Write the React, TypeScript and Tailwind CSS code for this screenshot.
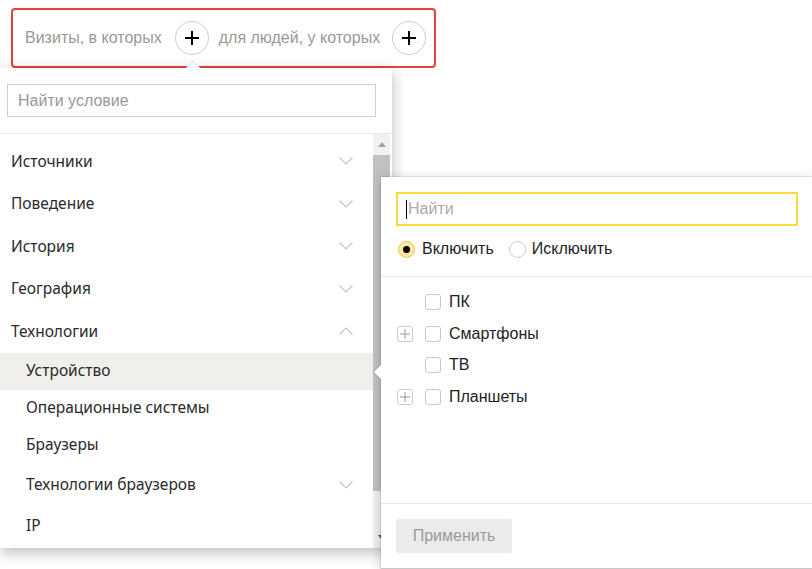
import React from "react";

const Chevron = ({ up = false }: { up?: boolean }) => (
  <svg width="14" height="8" viewBox="0 0 14 8" className="shrink-0">
    <path
      d={up ? "M0.5 7.5 L7 1 L13.5 7.5" : "M0.5 0.5 L7 7 L13.5 0.5"}
      fill="none"
      stroke="#c4c4c4"
      strokeWidth="1.1"
    />
  </svg>
);

const PlusCircle = () => (
  <div className="w-[34px] h-[34px] rounded-full border border-[#cfcfcf] flex items-center justify-center shrink-0 bg-white">
    <svg width="16" height="16" viewBox="0 0 16 16">
      <path d="M8 1 V15 M1 8 H15" stroke="#000" strokeWidth="2" />
    </svg>
  </div>
);

const SmallPlus = () => (
  <div className="w-[16px] h-[16px] rounded-[3px] border border-[#cccccc] flex items-center justify-center">
    <svg width="10" height="10" viewBox="0 0 10 10">
      <path d="M5 0 V10 M0 5 H10" stroke="#9a9a9a" strokeWidth="1" />
    </svg>
  </div>
);

const Checkbox = () => (
  <div className="w-[16px] h-[16px] rounded-[3px] border border-[#c8c8c8] bg-white" />
);

const topItems = ["Источники", "Поведение", "История", "География"];

export default function App() {
  return (
    <div
      className="relative w-[812px] h-[569px] bg-white overflow-hidden text-[16px] text-black"
      style={{ fontFamily: '"Liberation Sans", Arial, sans-serif' }}
    >
      {/* Header condition box */}
      <div className="ml-[11px] mt-[8px] w-[425px] h-[60px] border-2 border-[#e8413a] rounded-[4px] flex items-center pl-[12px]">
        <span className="text-[#999999]">Визиты, в которых</span>
        <div className="ml-[13px]">
          <PlusCircle />
        </div>
        <span className="text-[#999999] ml-[10px]">для людей, у которых</span>
        <div className="ml-[12px]">
          <PlusCircle />
        </div>
      </div>

      {/* Left dropdown */}
      <div className="absolute left-0 top-[68px] w-[392px] h-[480px] bg-white shadow-[0_4px_14px_rgba(0,0,0,0.28)] flex flex-col">
        <div className="absolute left-[188px] top-[-5px] w-[10px] h-[10px] bg-white rotate-45 border-l border-t border-[#e6e6e6]" />
        <div className="px-[7px] pt-[16px] pb-[16px] border-b border-[#e8e8e8] relative">
          <div className="w-[369px] h-[33px] border border-[#cfcfcf] flex items-center px-[10px] text-[#999999]">
            Найти условие
          </div>
        </div>
        <div
          className="flex flex-1 min-h-0 text-[15.5px]"
          style={{ fontFamily: '"Noto Sans", "Open Sans", sans-serif' }}
        >
          <div className="flex-1 pt-[6px] overflow-hidden">
            {topItems.map((t) => (
              <div key={t} className="h-[42.5px] flex items-center justify-between pl-[11px] pr-[20px] text-[#2b2b2b]">
                <span>{t}</span>
                <Chevron />
              </div>
            ))}
            <div className="h-[42.5px] flex items-center justify-between pl-[11px] pr-[20px] text-[#2b2b2b]">
              <span>Технологии</span>
              <Chevron up />
            </div>
            <div className="h-[37px] flex items-center pl-[26px] bg-[#f0efeb] text-[#2b2b2b]">Устройство</div>
            <div className="h-[37px] flex items-center pl-[26px] text-[#2b2b2b]">Операционные системы</div>
            <div className="h-[37px] flex items-center pl-[26px] text-[#2b2b2b]">Браузеры</div>
            <div className="h-[43px] flex items-center justify-between pl-[26px] pr-[20px] text-[#2b2b2b]">
              <span>Технологии браузеров</span>
              <Chevron />
            </div>
            <div className="h-[38px] flex items-center pl-[26px] text-[#2b2b2b]">IP</div>
          </div>
          <div className="w-[17px] mr-[2px] bg-[#f1f1f1] flex flex-col items-center">
            <div className="h-[21px] flex items-center justify-center">
              <svg width="8" height="5" viewBox="0 0 8 5">
                <path d="M0 5 L4 0 L8 5 Z" fill="#a3a3a3" />
              </svg>
            </div>
            <div className="w-full h-[336px] bg-[#c1c1c1]" />
            <div className="flex-1" />
            <div className="h-[21px] flex items-center justify-center">
              <svg width="8" height="5" viewBox="0 0 8 5">
                <path d="M0 0 L8 0 L4 5 Z" fill="#505050" />
              </svg>
            </div>
          </div>
        </div>
      </div>

      {/* Right panel */}
      <div className="absolute left-[381px] top-[177px] w-[431px] h-[392px] bg-white shadow-[0_0_0_1px_rgba(0,0,0,0.07),0_2px_10px_rgba(0,0,0,0.22)] flex flex-col">
        <div className="absolute left-[-5px] top-[190px] w-[10px] h-[10px] bg-white rotate-45 shadow-[-1px_1px_1px_rgba(0,0,0,0.08)]" />
        <div className="px-[15px] pt-[15px] relative">
          <div className="w-[402px] h-[34px] border-2 border-[#ffd93d] flex items-center pl-[8px] text-[#aaaaaa]">
            <span className="w-px h-[19px] bg-black mr-[1px]" />
            Найти
          </div>
          <div className="h-[50px] flex items-center pl-[2px] pb-[4px]">
            <div className="w-[17px] h-[17px] rounded-full border border-[#e8c75a] bg-[#ffe9a0] flex items-center justify-center">
              <div className="w-[7px] h-[7px] rounded-full bg-black" />
            </div>
            <span className="ml-[7px] text-[#222]">Включить</span>
            <div className="ml-[15px] w-[17px] h-[17px] rounded-full border border-[#cccccc] bg-white" />
            <span className="ml-[6px] text-[#222]">Исключить</span>
          </div>
        </div>
        <div className="border-t border-[#e6e6e6] pt-[9px] pl-[16px] flex-1">
          {[
            { t: "ПК", p: false },
            { t: "Смартфоны", p: true },
            { t: "ТВ", p: false },
            { t: "Планшеты", p: true },
          ].map((r) => (
            <div key={r.t} className="h-[31.7px] flex items-center text-[#222]">
              <div className="w-[16px]">{r.p ? <SmallPlus /> : null}</div>
              <div className="ml-[12px]">
                <Checkbox />
              </div>
              <span className="ml-[8px]">{r.t}</span>
            </div>
          ))}
        </div>
        <div className="border-t border-[#e6e6e6] h-[66px] pt-[15px] pl-[15px] border-b border-b-[#c8c8c8]">
          <div className="w-[116px] h-[34px] rounded-[3px] bg-[#ebebeb] text-[#9a9a9a] flex items-center justify-center">
            Применить
          </div>
        </div>
      </div>
    </div>
  );
}
